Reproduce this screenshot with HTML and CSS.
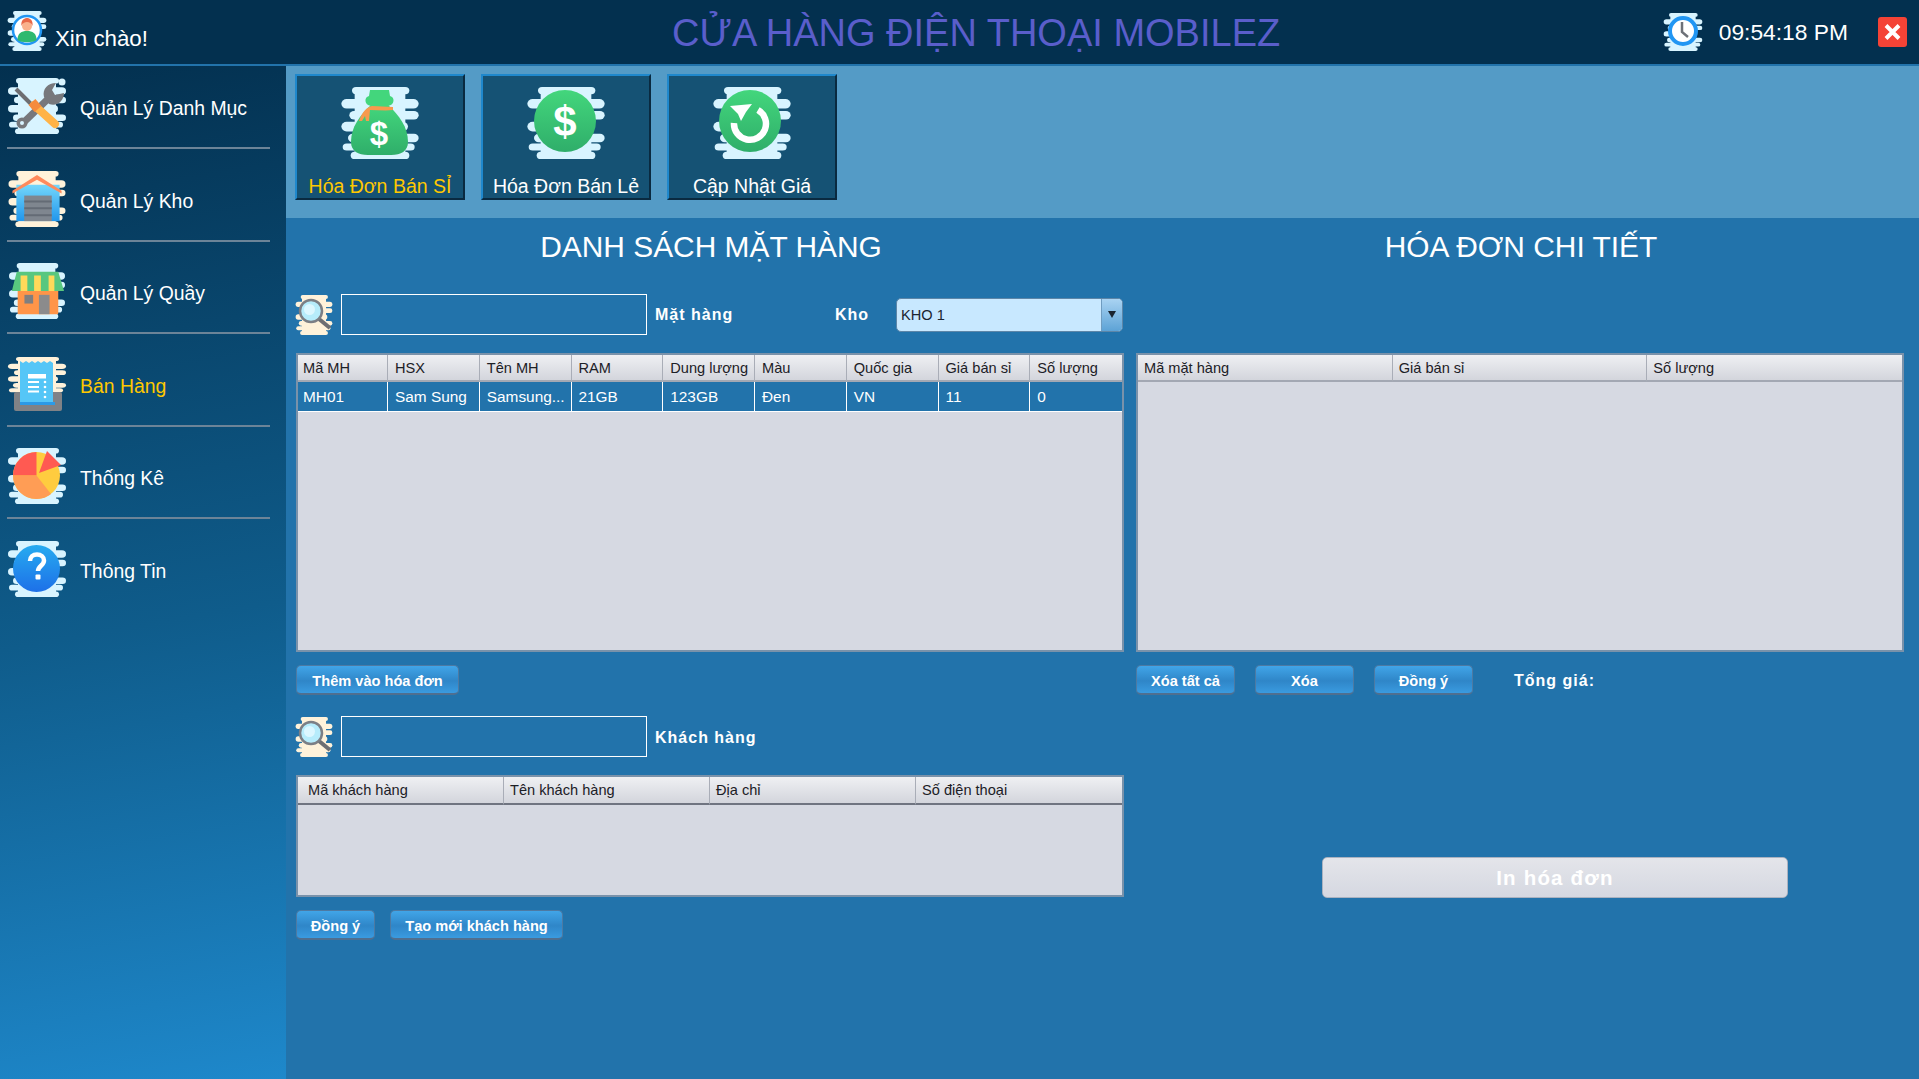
FILE: index.html
```html
<!DOCTYPE html>
<html lang="en">
<head>
    <meta charset="UTF-8">
    <title>Cửa hàng điện thoại MobileZ</title>
    <link rel="stylesheet" href="styles.css">
</head>
<body>
    <svg class="defs" aria-hidden="true">
        <defs>
            <linearGradient id="greenGrad" x1="0" y1="0" x2="0" y2="1">
                <stop offset="0" stop-color="#43d67c"/>
                <stop offset="1" stop-color="#2fae6a"/>
            </linearGradient>
            <linearGradient id="blueGrad" x1="0" y1="0" x2="0" y2="1">
                <stop offset="0" stop-color="#27abf0"/>
                <stop offset="1" stop-color="#1d70e8"/>
            </linearGradient>
            <linearGradient id="wallGrad" x1="0" y1="0" x2="0" y2="1">
                <stop offset="0" stop-color="#74d7fb"/>
                <stop offset="1" stop-color="#2196ec"/>
            </linearGradient>
            <!-- wavy blob behind every icon -->
            <symbol id="blob" viewBox="0 0 60 60" preserveAspectRatio="none">
                <g fill="currentColor">
                    <rect x="11" y="3" width="38" height="54"/>
                    <rect x="9" y="0" width="43" height="6" rx="3"/>
                    <rect x="1" y="10" width="58" height="8" rx="4"/>
                    <rect x="7" y="20" width="52" height="7" rx="3.500"/>
                    <rect x="1" y="29" width="50" height="8" rx="4"/>
                    <rect x="6" y="39" width="53" height="7" rx="3.500"/>
                    <rect x="2" y="47" width="54" height="6" rx="3"/>
                    <rect x="8" y="54" width="44" height="6" rx="3"/>
                </g>
            </symbol>
        </defs>
    </svg>

    <header class="topbar">
        <div class="greeting">
            <svg class="icon-user" viewBox="0 0 40 40">
                <use href="#blob" width="40" height="40" color="#d8f4ff"/>
                <circle cx="20" cy="19" r="14" fill="#fff" stroke="#2196f3" stroke-width="2.500"/>
                <path d="M10.500 29c0-7 4-9 9.500-9s9.500 2 9.500 9c-3 3-16 3-19 0z" fill="#2fb96f"/>
                <circle cx="20" cy="15" r="5" fill="#f9b18c"/>
                <path d="M14.500 15c-1-6 3-8 5.500-8s6.500 2 5.500 8c-1-3-3-4-5.500-4s-4.500 1-5.500 4z" fill="#e8694a"/>
            </svg>
            <span>Xin chào!</span>
        </div>
        <h1 class="app-title">CỬA HÀNG ĐIỆN THOẠI MOBILEZ</h1>
        <div class="clock">
            <svg class="icon-clock" viewBox="0 0 40 38">
                <use href="#blob" width="40" height="38" color="#d8f4ff"/>
                <circle cx="20" cy="18" r="13" fill="#fff" stroke="#2196f3" stroke-width="4"/>
                <path d="M19 9v10l6 5" fill="none" stroke="#6d7178" stroke-width="2.500"/>
            </svg>
            <span class="time">09:54:18 PM</span>
            <div class="close-btn">
                <svg viewBox="0 0 29 30"><path d="M8 8.500l13 13M21 8.500l-13 13" stroke="#fff" stroke-width="4"/></svg>
            </div>
        </div>
    </header>

    <div class="layout">
        <nav class="sidebar">
            <a class="nav-item">
                <svg class="nav-icon" viewBox="0 0 60 56">
                    <use href="#blob" width="60" height="56" color="#d8f4ff"/>
                    <circle cx="55" cy="4" r="3.500" fill="#d8f4ff"/>
                    <path d="M9 11l17 17" stroke="#6d6e72" stroke-width="4"/>
                    <path d="M16 45l27-26" stroke="#77787c" stroke-width="7"/>
                    <circle cx="15" cy="45" r="5.500" fill="#77787c"/>
                    <circle cx="15" cy="45" r="2" fill="#d8f4ff"/>
                    <path d="M37 19c-2-8 4-14 12-14l-4 7 3 5 9-2c0 8-7 14-15 11z" fill="#77787c"/>
                    <path d="M27 27l21 19" stroke="#ffb347" stroke-width="8" stroke-linecap="round"/>
                    <path d="M25 24l6 7" stroke="#f58b3c" stroke-width="9"/>
                </svg>
                <span>Quản Lý Danh Mục</span>
            </a>
            <a class="nav-item">
                <svg class="nav-icon" viewBox="0 0 60 57">
                    <use href="#blob" width="60" height="57" color="#fff2da"/>
                    <rect x="9" y="14" width="44" height="37" fill="url(#wallGrad)"/>
                    <rect x="17" y="25" width="28" height="26" fill="#7f868f"/>
                    <path d="M17 31h28M17 38h28M17 45h28" stroke="#646b75" stroke-width="2"/>
                    <path d="M5 20L30 4l25 16v3L30 9 5 23z" fill="#ff8a5c"/>
                </svg>
                <span>Quản Lý Kho</span>
            </a>
            <a class="nav-item">
                <svg class="nav-icon" viewBox="0 0 60 58">
                    <use href="#blob" width="60" height="58" color="#d8f4ff"/>
                    <rect x="10" y="28" width="42" height="25" rx="1" fill="#ff9548"/>
                    <rect x="17" y="33" width="9" height="9" fill="#7f7f80"/>
                    <rect x="32" y="33" width="11" height="20" fill="#8b8b8c"/>
                    <path d="M9 9h43l6 20H4z" fill="#58c77f"/>
                    <path d="M13 13h7v16h-7zM27 13h7v16h-7zM42 13h6v16h-6z" fill="#ffd95a"/>
                </svg>
                <span>Quản Lý Quầy</span>
            </a>
            <a class="nav-item active">
                <svg class="nav-icon" viewBox="0 0 60 54">
                    <use href="#blob" width="60" height="40" color="#fff2da"/>
                    <rect x="7" y="35" width="48" height="19" rx="2" fill="#808286"/>
                    <path d="M13 4l3 2 3-2 3 2 3-2 3 2 3-2 3 2 3-2 3 2 3-2 3 2v42H13z" fill="#55c6f7"/>
                    <rect x="13" y="45" width="35" height="3" fill="#2c9ae6"/>
                    <rect x="21" y="17" width="18" height="4.500" fill="#fff"/>
                    <path d="M21 25h11M21 30h11M21 34.500h11" stroke="#fff" stroke-width="1.800"/>
                    <circle cx="38" cy="25" r="1.300" fill="#fff"/>
                    <circle cx="38" cy="30" r="1.300" fill="#fff"/>
                    <circle cx="38" cy="35" r="1.300" fill="#fff"/>
                    <circle cx="38" cy="40" r="1.300" fill="#fff"/>
                </svg>
                <span>Bán Hàng</span>
            </a>
            <a class="nav-item">
                <svg class="nav-icon" viewBox="0 0 60 56">
                    <use href="#blob" width="60" height="56" color="#d8f4ff"/>
                    <circle cx="29.500" cy="27.500" r="23.500" fill="#ffcc3f"/>
                    <path d="M29.500 27.500L6 27.500A23.500 23.500 0 0 1 29.500 4z" fill="#ff5a52"/>
                    <path d="M29.500 27.500L6 27.500A23.500 23.500 0 0 0 44 46z" fill="#ff9d55"/>
                    <path d="M32 25l8-22 14 14z" fill="#ff5a52"/>
                </svg>
                <span>Thống Kê</span>
            </a>
            <a class="nav-item">
                <svg class="nav-icon" viewBox="0 0 60 56">
                    <use href="#blob" width="60" height="56" color="#d8f4ff"/>
                    <circle cx="29.500" cy="27.500" r="23.500" fill="url(#blueGrad)"/>
                    <path d="M23 20c0-4 3-6.500 7-6.500s7 2.500 7 6c0 5-6 5.500-6 10.500" fill="none" stroke="#fff" stroke-width="4.500"/>
                    <rect x="28.500" y="33.500" width="5" height="5" rx="1" fill="#fff"/>
                </svg>
                <span>Thông Tin</span>
            </a>
        </nav>

        <main class="content">
            <section class="toolbar">
                <div class="tool-btn active">
                    <svg class="tool-icon" viewBox="0 0 80 72">
                        <use href="#blob" width="80" height="72" color="#d8f4ff"/>
                        <path d="M31 18C20 28 11 40 11 55c0 9 7 13 17 13h23c10 0 17-4 17-13 0-15-9-27-20-37z" fill="url(#greenGrad)"/>
                        <path d="M30 3h19l1 6c5 1 5 9-2 10H31c-7-1-7-9-2-10z" fill="#43d67c"/>
                        <path d="M53 20c-7 0-14-1-21-1-5 1-10 6-13 15h3l3-5 1 5h3l1-11c8 0 16 1 23 0z" fill="#f79a4d"/>
                        <text class="bag-dollar" x="39" y="58">$</text>
                    </svg>
                    <span>Hóa Đơn Bán SỈ</span>
                </div>
                <div class="tool-btn">
                    <svg class="tool-icon" viewBox="0 0 80 72">
                        <use href="#blob" width="80" height="72" color="#d8f4ff"/>
                        <circle cx="39" cy="34" r="31" fill="url(#greenGrad)"/>
                        <text class="coin-dollar" x="39" y="49">$</text>
                    </svg>
                    <span>Hóa Đơn Bán Lẻ</span>
                </div>
                <div class="tool-btn">
                    <svg class="tool-icon" viewBox="0 0 80 72">
                        <use href="#blob" width="80" height="72" color="#d8f4ff"/>
                        <circle cx="38" cy="34" r="31" fill="url(#greenGrad)"/>
                        <path d="M46 23a16 16 0 1 1-24 13" fill="none" stroke="#fff" stroke-width="6.500"/>
                        <path d="M18 19l22-2-6 8-5 9-3-7z" fill="#fff"/>
                    </svg>
                    <span>Cập Nhật Giá</span>
                </div>
            </section>

            <div class="work">
                <section class="panel">
                    <h2 class="panel-title">DANH SÁCH MẶT HÀNG</h2>
                    <div class="search-row">
                        <svg class="search-icon" viewBox="0 0 38 40">
                            <use href="#blob" width="38" height="40" color="#fff2da"/>
                            <path d="M24 24l11 9" stroke="#6d6e72" stroke-width="4"/>
                            <circle cx="16" cy="16" r="11" fill="#b6ecfb" stroke="#7c7f85" stroke-width="2.500"/>
                            <circle cx="14.500" cy="14.500" r="5.500" fill="#dcf7ff"/>
                        </svg>
                        <input class="search-input" type="text">
                        <label class="field-label item-label">Mặt hàng</label>
                        <label class="field-label store-label">Kho</label>
                        <div class="select">
                            <span class="select-value">KHO 1</span>
                            <span class="select-arrow"></span>
                        </div>
                    </div>
                    <table class="grid products">
                        <thead>
                            <tr><th>Mã MH</th><th>HSX</th><th>Tên MH</th><th>RAM</th><th>Dung lượng</th><th>Màu</th><th>Quốc gia</th><th>Giá bán sỉ</th><th>Số lượng</th></tr>
                        </thead>
                        <tbody>
                            <tr class="selected"><td>MH01</td><td>Sam Sung</td><td>Samsung...</td><td>21GB</td><td>123GB</td><td>Đen</td><td>VN</td><td>11</td><td>0</td></tr>
                        </tbody>
                    </table>
                    <div class="btn-row">
                        <button class="btn wide">Thêm vào hóa đơn</button>
                    </div>
                    <div class="search-row customer-search">
                        <svg class="search-icon" viewBox="0 0 38 40">
                            <use href="#blob" width="38" height="40" color="#fff2da"/>
                            <path d="M24 24l11 9" stroke="#6d6e72" stroke-width="4"/>
                            <circle cx="16" cy="16" r="11" fill="#b6ecfb" stroke="#7c7f85" stroke-width="2.500"/>
                            <circle cx="14.500" cy="14.500" r="5.500" fill="#dcf7ff"/>
                        </svg>
                        <input class="search-input" type="text">
                        <label class="field-label customer-label">Khách hàng</label>
                    </div>
                    <table class="grid customers">
                        <thead>
                            <tr><th>Mã khách hàng</th><th>Tên khách hàng</th><th>Địa chỉ</th><th>Số điện thoại</th></tr>
                        </thead>
                    </table>
                    <div class="btn-row customer-btns">
                        <button class="btn small">Đồng ý</button>
                        <button class="btn create">Tạo mới khách hàng</button>
                    </div>
                </section>

                <section class="panel">
                    <h2 class="panel-title">HÓA ĐƠN CHI TIẾT</h2>
                    <table class="grid details">
                        <thead>
                            <tr><th>Mã mặt hàng</th><th>Giá bán sỉ</th><th>Số lượng</th></tr>
                        </thead>
                    </table>
                    <div class="btn-row detail-btns">
                        <button class="btn medium">Xóa tất cả</button>
                        <button class="btn medium">Xóa</button>
                        <button class="btn medium">Đồng ý</button>
                        <span class="total-label">Tổng giá:</span>
                    </div>
                    <button class="print-btn">In hóa đơn</button>
                </section>
            </div>
        </main>
    </div>
</body>
</html>
```

FILE: styles.css
```css
* {
    box-sizing: border-box;
}
html, body {
    height: 100%;
}
body {
    margin: 0;
    height: 1079px;
    overflow: hidden;
    font-family: "Liberation Sans", Arial, sans-serif;
    color: #fff;
    display: flex;
    flex-direction: column;
    background: #2273ab;
}
.defs {
    width: 0;
    height: 0;
    display: block;
}

/* top bar */
.topbar {
    height: 66px;
    flex: none;
    background: #03304f;
    border-bottom: 2px solid #2273ab;
    display: grid;
    grid-template-columns: 672px 1fr auto;
    align-items: center;
}
.greeting {
    display: flex;
    align-items: center;
    padding-left: 7px;
    font-size: 22.3px;
}
.greeting span {
    margin: 13px 0 0 8px;
}
.icon-user {
    width: 40px;
    height: 40px;
    margin-top: -2px;
}
.app-title {
    margin: 2px 0 0;
    font-size: 38px;
    font-weight: normal;
    color: #5a5ecb;
    white-space: nowrap;
}
.clock {
    display: flex;
    align-items: center;
    padding-right: 12px;
}
.icon-clock {
    width: 40px;
    height: 38px;
}
.time {
    margin: 0 30px 0 16px;
    font-size: 22.800px;
}
.close-btn {
    width: 29px;
    height: 30px;
    background: #f44336;
    border-radius: 3px;
}
.close-btn svg {
    display: block;
    width: 29px;
    height: 30px;
}

.layout {
    flex: 1;
    display: flex;
    min-height: 0;
}

/* side menu */
.sidebar {
    width: 286px;
    flex: none;
    padding: 0 16px 0 7px;
    background: linear-gradient(170deg, #03304f 0%, #0f5c8b 55%, #1e88cb 100%);
}
.nav-item {
    height: 92.6px;
    display: flex;
    align-items: flex-end;
    padding-bottom: 13px;
    border-bottom: 2px solid #6c8498;
    font-size: 19.4px;
}
.nav-item:first-child {
    height: 83px;
}
.nav-item:last-child {
    border-bottom-color: transparent;
}
.nav-item span {
    margin: 0 0 14px 13px;
}
.nav-item.active {
    color: #ffc800;
}
.nav-icon {
    width: 60px;
    height: 56px;
    flex: none;
}

.content {
    flex: 1;
    min-width: 0;
    display: flex;
    flex-direction: column;
}

/* big buttons */
.toolbar {
    height: 152px;
    flex: none;
    display: flex;
    gap: 16px;
    padding: 8px 0 0 9px;
    background: #549bc6;
}
.tool-btn {
    width: 170px;
    height: 126px;
    background: #155274;
    border: 2px solid;
    border-color: #1f88cc #0a2a40 #0a2a40 #1f88cc;
    display: flex;
    flex-direction: column;
    align-items: center;
    padding-top: 11px;
    font-size: 19.500px;
}
.tool-btn.active {
    color: #ffc800;
}
.tool-btn span {
    margin-top: 16px;
    white-space: nowrap;
}
.tool-icon {
    width: 80px;
    height: 72px;
    flex: none;
}
.bag-dollar, .coin-dollar {
    font-family: "Liberation Sans", Arial, sans-serif;
    font-weight: bold;
    fill: #fff;
    text-anchor: middle;
}
.bag-dollar {
    font-size: 33px;
}
.coin-dollar {
    font-size: 42px;
}

/* two panels */
.work {
    display: grid;
    grid-template-columns: 828px 768px;
    gap: 12px;
    padding-left: 10px;
}
.panel {
    min-width: 0;
}
.panel-title {
    margin: 0;
    height: 58px;
    line-height: 58px;
    padding-left: 2px;
    text-align: center;
    font-size: 29.9px;
    font-weight: normal;
}
.search-row {
    display: flex;
    align-items: center;
    height: 41px;
    margin-top: 18px;
}
.customer-search {
    margin-top: 21px;
}
.search-icon {
    width: 38px;
    height: 40px;
    margin: 0 8px 0 -1px;
    flex: none;
}
.search-input {
    width: 306px;
    height: 41px;
    border: 1.5px solid #fff;
    background: transparent;
    margin: 0 8px 0 0;
    padding: 0;
}
.field-label {
    font-size: 16px;
    font-weight: bold;
    letter-spacing: 1px;
}
.customer-label {
    margin-top: 2px;
}
.item-label {
    width: 180px;
}
.store-label {
    width: 61px;
}
.select {
    width: 227px;
    height: 34px;
    display: flex;
    background: #c8e8ff;
    border: 1px solid #5d86a8;
    border-radius: 5px;
    overflow: hidden;
}
.select-value {
    flex: 1;
    padding-left: 4px;
    line-height: 32px;
    font-size: 14.6px;
    color: #1a2430;
}
.select-arrow {
    width: 21px;
    background: linear-gradient(#a9d3f2, #5da3d6);
    border-left: 1px solid #6f9cc0;
    position: relative;
}
.select-arrow::after {
    content: "";
    position: absolute;
    left: 6px;
    top: 12px;
    border: 4.5px solid transparent;
    border-top: 7px solid #1a2430;
    border-bottom: none;
}

/* data grids */
.grid {
    width: 100%;
    table-layout: fixed;
    border-collapse: separate;
    border-spacing: 0;
    background: #d6d9e2;
    border: 2px solid #7a92aa;
    display: block;
    color: #1c2026;
}
.grid thead, .grid tbody {
    display: table;
    width: 100%;
    table-layout: fixed;
    border-spacing: 0;
}
.grid th {
    height: 27px;
    padding: 0 0 0 6px;
    font-size: 14.6px;
    font-weight: normal;
    text-align: left;
    white-space: nowrap;
    overflow: hidden;
    background: linear-gradient(#eff0f3, #d3d5dc);
    border-right: 1px solid #a9adb7;
    border-bottom: 2px solid #a3a8b3;
}
.grid th:last-child {
    border-right: none;
}
.grid td {
    height: 30px;
    padding: 0 0 0 6px;
    font-size: 15.400px;
    white-space: nowrap;
    overflow: hidden;
    border-right: 1px solid #fff;
    border-bottom: 1px solid #fff;
}
.grid td:last-child {
    border-right: none;
}
.selected td {
    background: #2273ab;
    color: #fff;
}
.products {
    height: 299px;
    margin-top: 18px;
}
.products th, .products td {
    padding-left: 7px;
}
.products th:first-child, .products td:first-child {
    width: 90px;
    padding-left: 5px;
}
.customers {
    height: 122px;
    margin-top: 18px;
}
.customers th {
    height: 28px;
    border-bottom-color: #6f7480;
}
.customers th:first-child {
    padding-left: 10px;
}
.details {
    height: 299px;
    margin-top: 77px;
}

/* buttons */
.btn-row {
    display: flex;
    margin-top: 13px;
    align-items: center;
}
.btn {
    height: 30px;
    padding: 2px 0 0;
    font-family: inherit;
    font-size: 14.6px;
    font-weight: bold;
    color: #fff;
    border: 1px solid #4d7aa3;
    border-bottom: 2px solid #4f6f90;
    border-radius: 5px;
    background: linear-gradient(#41a5e8 0%, #2f86c8 55%, #3a9be0 100%);
}
.wide {
    width: 163px;
}
.small {
    width: 79px;
}
.create {
    width: 173px;
    margin-left: 15px;
}
.medium {
    width: 99px;
    margin-right: 20px;
}
.total-label {
    margin: 2px 0 0 21px;
    font-size: 16px;
    font-weight: bold;
    letter-spacing: 1px;
}
.print-btn {
    display: block;
    width: 466px;
    height: 41px;
    margin: 162px 0 0 186px;
    font-family: inherit;
    font-size: 20.5px;
    font-weight: bold;
    letter-spacing: 1.2px;
    color: #fff;
    background: linear-gradient(#e4e5ea, #d5d8e1);
    border: 1px solid #aab2c0;
    border-radius: 5px;
}
```
